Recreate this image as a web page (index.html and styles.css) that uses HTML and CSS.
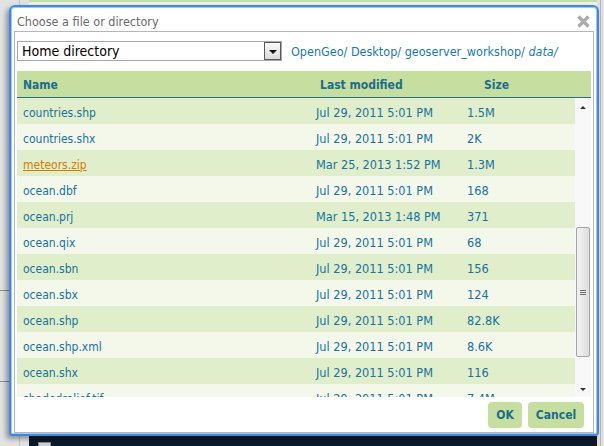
FILE: index.html
```html
<!DOCTYPE html>
<html>
<head>
<meta charset="utf-8">
<link rel="stylesheet" href="styles.css">
</head>
<body>
<div class="backdrop">
  <div class="bd-left"></div>
  <div class="bd-main"></div>
  <div class="bd-bottom"><div class="bd-square"></div></div>
  <div class="bd-right"></div>
</div>

<div class="dialog">
  <div class="titlebar">
    <span class="title">Choose a file or directory</span>
    <svg class="close" width="15" height="13" viewBox="0 0 15 13">
      <path d="M2.5 1.5 L12.5 11.5 M12.5 1.5 L2.5 11.5" stroke="#ababab" stroke-width="3.4" stroke-linecap="butt" fill="none"/>
    </svg>
  </div>
  <div class="panel">
    <div class="toolbar">
      <div class="select">
        <span class="select-value">Home directory</span>
        <span class="select-btn"><span class="tri-down"></span></span>
      </div>
      <div class="crumbs">OpenGeo/ Desktop/ geoserver_workshop/ <em>data/</em></div>
    </div>
    <div class="head">
      <span class="hname">Name</span>
      <span>Last modified</span>
      <span>Size</span>
    </div>
    <div class="body">
      <div class="rows">
        <div class="row"><span class="name">countries.shp</span><span class="num">Jul 29, 2011 5:01 PM</span><span class="num">1.5M</span></div>
        <div class="row"><span class="name">countries.shx</span><span class="num">Jul 29, 2011 5:01 PM</span><span class="num">2K</span></div>
        <div class="row"><span class="name link">meteors.zip</span><span class="num">Mar 25, 2013 1:52 PM</span><span class="num">1.3M</span></div>
        <div class="row"><span class="name">ocean.dbf</span><span class="num">Jul 29, 2011 5:01 PM</span><span class="num">168</span></div>
        <div class="row"><span class="name">ocean.prj</span><span class="num">Mar 15, 2013 1:48 PM</span><span class="num">371</span></div>
        <div class="row"><span class="name">ocean.qix</span><span class="num">Jul 29, 2011 5:01 PM</span><span class="num">68</span></div>
        <div class="row"><span class="name">ocean.sbn</span><span class="num">Jul 29, 2011 5:01 PM</span><span class="num">156</span></div>
        <div class="row"><span class="name">ocean.sbx</span><span class="num">Jul 29, 2011 5:01 PM</span><span class="num">124</span></div>
        <div class="row"><span class="name">ocean.shp</span><span class="num">Jul 29, 2011 5:01 PM</span><span class="num">82.8K</span></div>
        <div class="row"><span class="name">ocean.shp.xml</span><span class="num">Jul 29, 2011 5:01 PM</span><span class="num">8.6K</span></div>
        <div class="row"><span class="name">ocean.shx</span><span class="num">Jul 29, 2011 5:01 PM</span><span class="num">116</span></div>
        <div class="row"><span class="name">shadedrelief.tif</span><span class="num">Jul 29, 2011 5:01 PM</span><span class="num">7.4M</span></div>
      </div>
      <div class="scrollbar">
        <div class="sb-btn"><span class="tri-up"></span></div>
        <div class="sb-track">
          <div class="sb-thumb"><span class="grip"></span><span class="grip"></span><span class="grip"></span></div>
        </div>
        <div class="sb-btn"><span class="tri-down small"></span></div>
      </div>
    </div>
    <div class="footer">
      <button class="btn ok">OK</button>
      <button class="btn cancel">Cancel</button>
    </div>
  </div>
</div>
</body>
</html>
```

FILE: styles.css
```css
html, body {
  margin: 0;
  padding: 0;
}
body {
  width: 604px;
  height: 446px;
  overflow: hidden;
  position: relative;
  background: #e4e4e4;
  font-family: "DejaVu Sans Condensed", "Liberation Sans", sans-serif;
}

/* page behind the dialog */
.backdrop {
  display: grid;
  grid-template-columns: 29px 1fr 7px;
  grid-template-rows: 1fr 10px;
  height: 446px;
}
.bd-left {
  grid-column: 1;
  grid-row: 1 / 3;
  background:
    linear-gradient(#8c8c8c, #8c8c8c) 0 290px / 9px 1px no-repeat,
    linear-gradient(#8c8c8c, #8c8c8c) 0 381px / 9px 1px no-repeat,
    linear-gradient(#c2c2c2, #c2c2c2) 19px 0 / 1px 100% no-repeat,
    #e2e2e2;
}
.bd-main {
  grid-column: 2;
  grid-row: 1;
  background: linear-gradient(#c5df9e, #c5df9e) 0 0 / 100% 2px no-repeat, #efefef;
}
.bd-bottom {
  grid-column: 2;
  grid-row: 2;
  background: #0c1a28;
  padding: 6px 0 0 9px;
}
.bd-square {
  width: 11px;
  height: 6px;
  border: 1px solid #8a8a8a;
  border-bottom: none;
  background: #d0d0d0;
}
.bd-right {
  grid-column: 3;
  grid-row: 1 / 3;
  background: linear-gradient(#b5b5b5, #b5b5b5) 3px 0 / 1px 100% no-repeat, #e0e0e0;
}

/* dialog window */
.dialog {
  position: absolute;
  left: 9px;
  top: 5px;
  width: 580px;
  padding: 0 3px 1px;
  background: #fff;
  border: 2px solid #3a8be6;
  border-radius: 6px 6px 4px 4px;
  box-shadow: -3px 3px 5px rgba(0, 0, 0, 0.35), inset 0 0 0 1px #9cc7f3;
}
.titlebar {
  height: 24px;
  box-sizing: border-box;
  padding: 5px 0 0 3px;
  display: flex;
  align-items: center;
  justify-content: space-between;
}
.title {
  font-size: 12.5px;
  color: #6a6a6a;
}
.close {
  margin-right: 3px;
}

.panel {
  border: 1px solid #b6b6b6;
  height: 387px;
  padding: 9px 2px 4px 2px;
  display: flex;
  flex-direction: column;
}

.toolbar {
  display: flex;
  align-items: center;
  height: 20px;
  margin-bottom: 10px;
}
.select {
  width: 263px;
  height: 18px;
  border: 1px solid #a8a8a8;
  display: flex;
  background: #fff;
}
.select-value {
  flex: 1;
  padding-left: 4px;
  font-size: 14px;
  line-height: 18px;
  color: #000;
}
.select-btn {
  width: 15px;
  height: 16px;
  border: 1px solid #5a5a5a;
  background: linear-gradient(#fbfbfb, #dadada);
  display: flex;
  align-items: center;
  justify-content: center;
}
.tri-down {
  width: 0;
  height: 0;
  border-left: 4px solid transparent;
  border-right: 4px solid transparent;
  border-top: 4px solid #111;
  margin-top: 1px;
}
.tri-down.small {
  border-left-width: 3px;
  border-right-width: 3px;
  border-top: 3px solid #333;
}
.tri-up {
  width: 0;
  height: 0;
  border-left: 3px solid transparent;
  border-right: 3px solid transparent;
  border-bottom: 3px solid #333;
  margin-top: 2px;
}
.crumbs {
  margin-left: 9px;
  font-size: 12.5px;
  color: #1878b4;
  white-space: nowrap;
}
.crumbs em {
  font-style: italic;
}

.head {
  display: grid;
  grid-template-columns: 303px 164px 1fr;
  align-items: center;
  height: 26px;
  box-sizing: border-box;
  padding-top: 2px;
  background: #c6df9f;
  border-bottom: 1px solid #2c6f85;
  font-size: 12px;
  font-weight: bold;
  color: #1b6d8d;
  height: 27px;
}
.hname {
  padding-left: 6px;
}

.body {
  display: flex;
  height: 299px;
}
.rows {
  flex: 1;
  overflow: hidden;
}
.row {
  display: grid;
  grid-template-columns: 299px 151px 1fr;
  align-items: center;
  height: 26px;
  box-sizing: border-box;
  padding-top: 3px;
  font-size: 12px;
  color: #17729f;
  white-space: nowrap;
}
.row .num {
  font-size: 12.6px;
}
.row:nth-child(odd) {
  background: #e0eecb;
}
.row:nth-child(even) {
  background: #f4f8ea;
}
.name {
  padding-left: 6px;
}
.name.link {
  color: #d97b00;
  text-decoration: underline;
}

.scrollbar {
  width: 16px;
  background: #f8f8f8;
  display: flex;
  flex-direction: column;
}
.sb-btn {
  height: 16px;
  display: flex;
  align-items: center;
  justify-content: center;
}
.sb-track {
  flex: 1;
  padding-top: 113px;
}
.sb-thumb {
  margin-left: 1px;
  width: 12px;
  height: 128px;
  border: 1px solid #a4a4a4;
  border-radius: 2px;
  background: linear-gradient(90deg, #f2f2f2, #dedede);
  display: flex;
  flex-direction: column;
  align-items: center;
  justify-content: center;
  gap: 1px;
}
.grip {
  width: 6px;
  height: 1px;
  background: #6e6e6e;
}

.footer {
  display: flex;
  justify-content: flex-end;
  gap: 6px;
  margin-top: 5px;
  padding-right: 7px;
}
.btn {
  height: 26px;
  border: none;
  border-radius: 4px;
  background: #c6df9f;
  color: #1b6d8d;
  font-family: "DejaVu Sans Condensed", "Liberation Sans", sans-serif;
  font-size: 12px;
  font-weight: bold;
  padding: 0;
}
.btn.ok {
  width: 34px;
}
.btn.cancel {
  width: 56px;
}
```
